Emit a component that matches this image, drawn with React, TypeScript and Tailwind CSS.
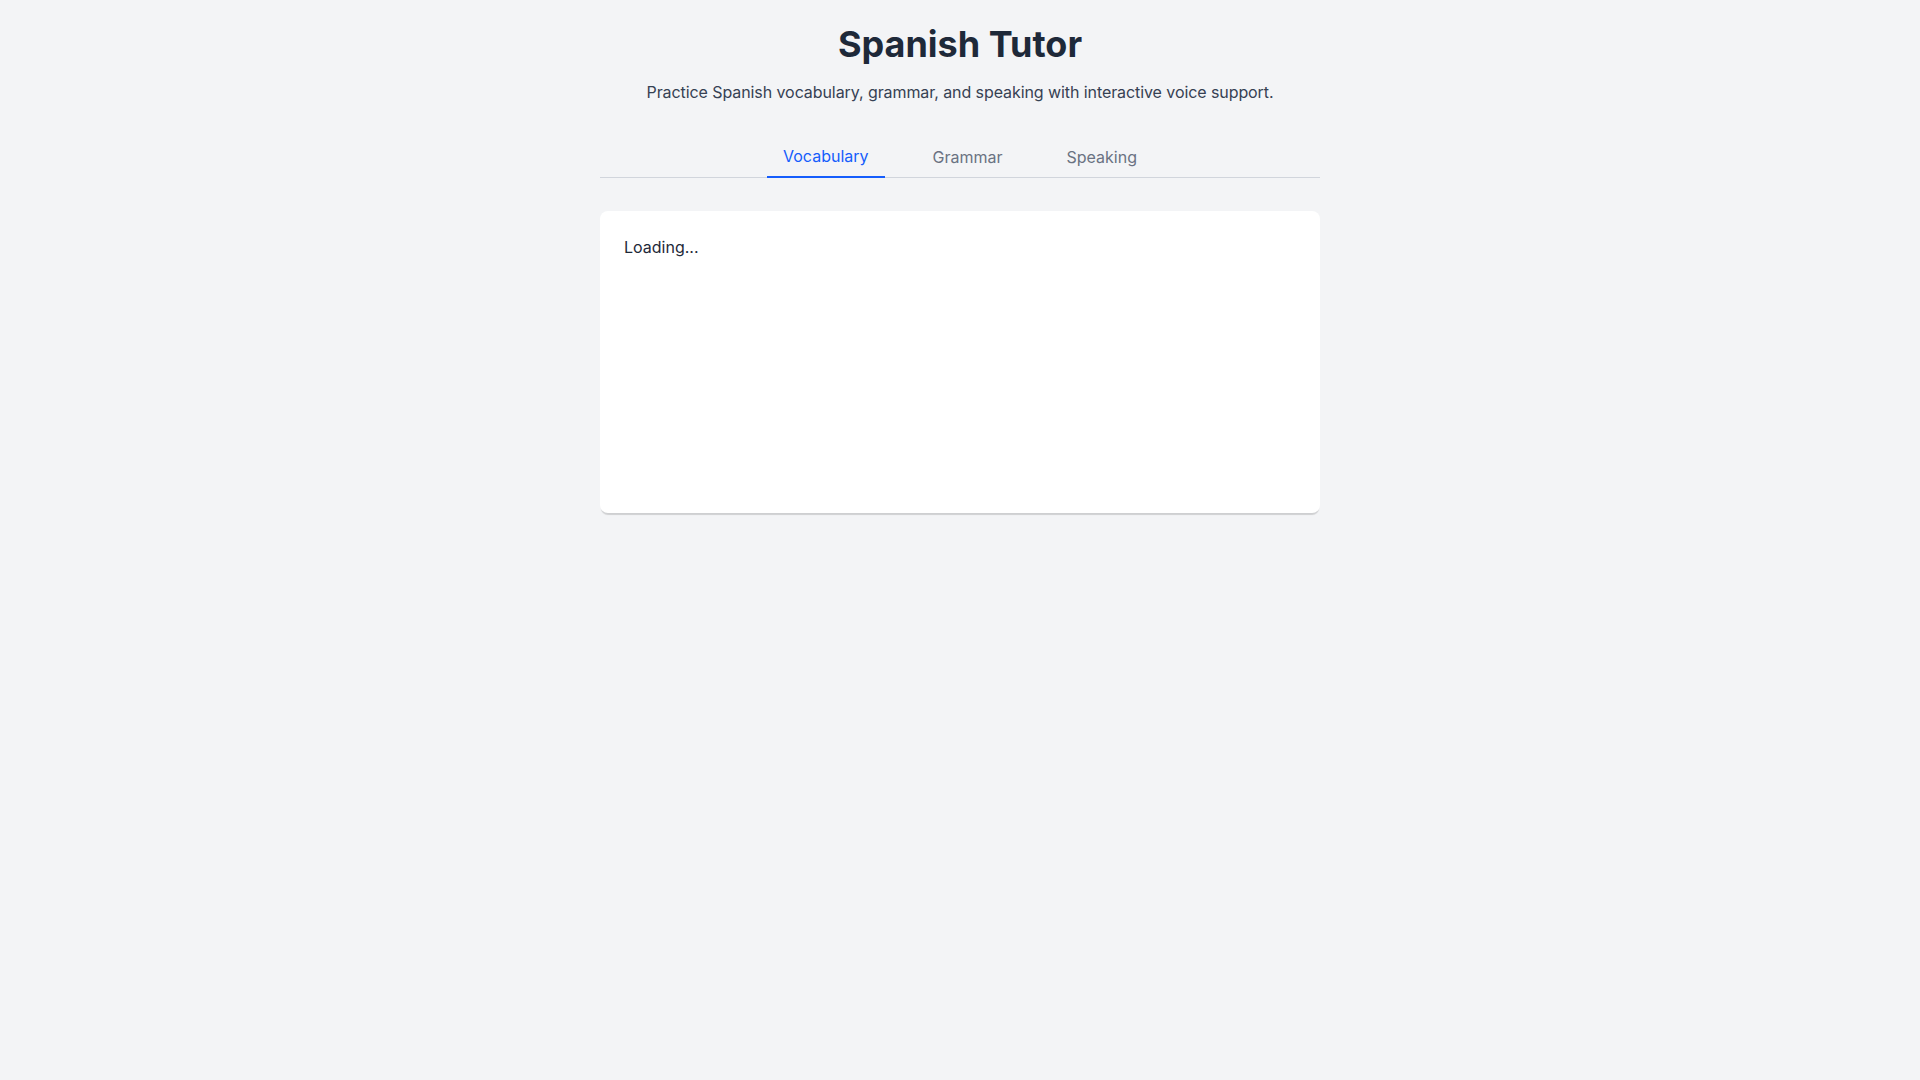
import { useState } from "react";

const tabs = ["Vocabulary", "Grammar", "Speaking"];

const App = () => {
  const [active, setActive] = useState("Vocabulary");

  return (
    <div className="min-h-screen bg-gray-100 font-['Inter',sans-serif] text-gray-800">
      <div className="max-w-3xl mx-auto px-6 pt-6 pb-10">
        <header className="text-center">
          <h1 className="text-4xl font-bold text-gray-800">Spanish Tutor</h1>
          <p className="mt-4 text-base text-gray-700 tracking-[-0.08px]">
            Practice Spanish vocabulary, grammar, and speaking with interactive voice support.
          </p>
        </header>

        <nav className="mt-8 flex justify-center gap-8 border-b border-gray-300">
          {tabs.map((tab) => (
            <button
              key={tab}
              onClick={() => setActive(tab)}
              className={
                tab === active
                  ? "-mb-px px-4 pt-2 pb-2 border-b-2 border-blue-600 text-blue-600 text-base"
                  : "-mb-px px-4 pt-[9px] pb-[7px] border-b-2 border-transparent text-gray-500 text-base hover:text-gray-700"
              }
            >
              {tab}
            </button>
          ))}
        </nav>

        <main className="mt-[33px] bg-white rounded-lg p-6 min-h-[302px] shadow-[0_3px_1px_-1px_rgba(0,0,0,0.15)]">
          <p className="text-base text-gray-800">Loading...</p>
        </main>
      </div>
    </div>
  );
};

export default App;
